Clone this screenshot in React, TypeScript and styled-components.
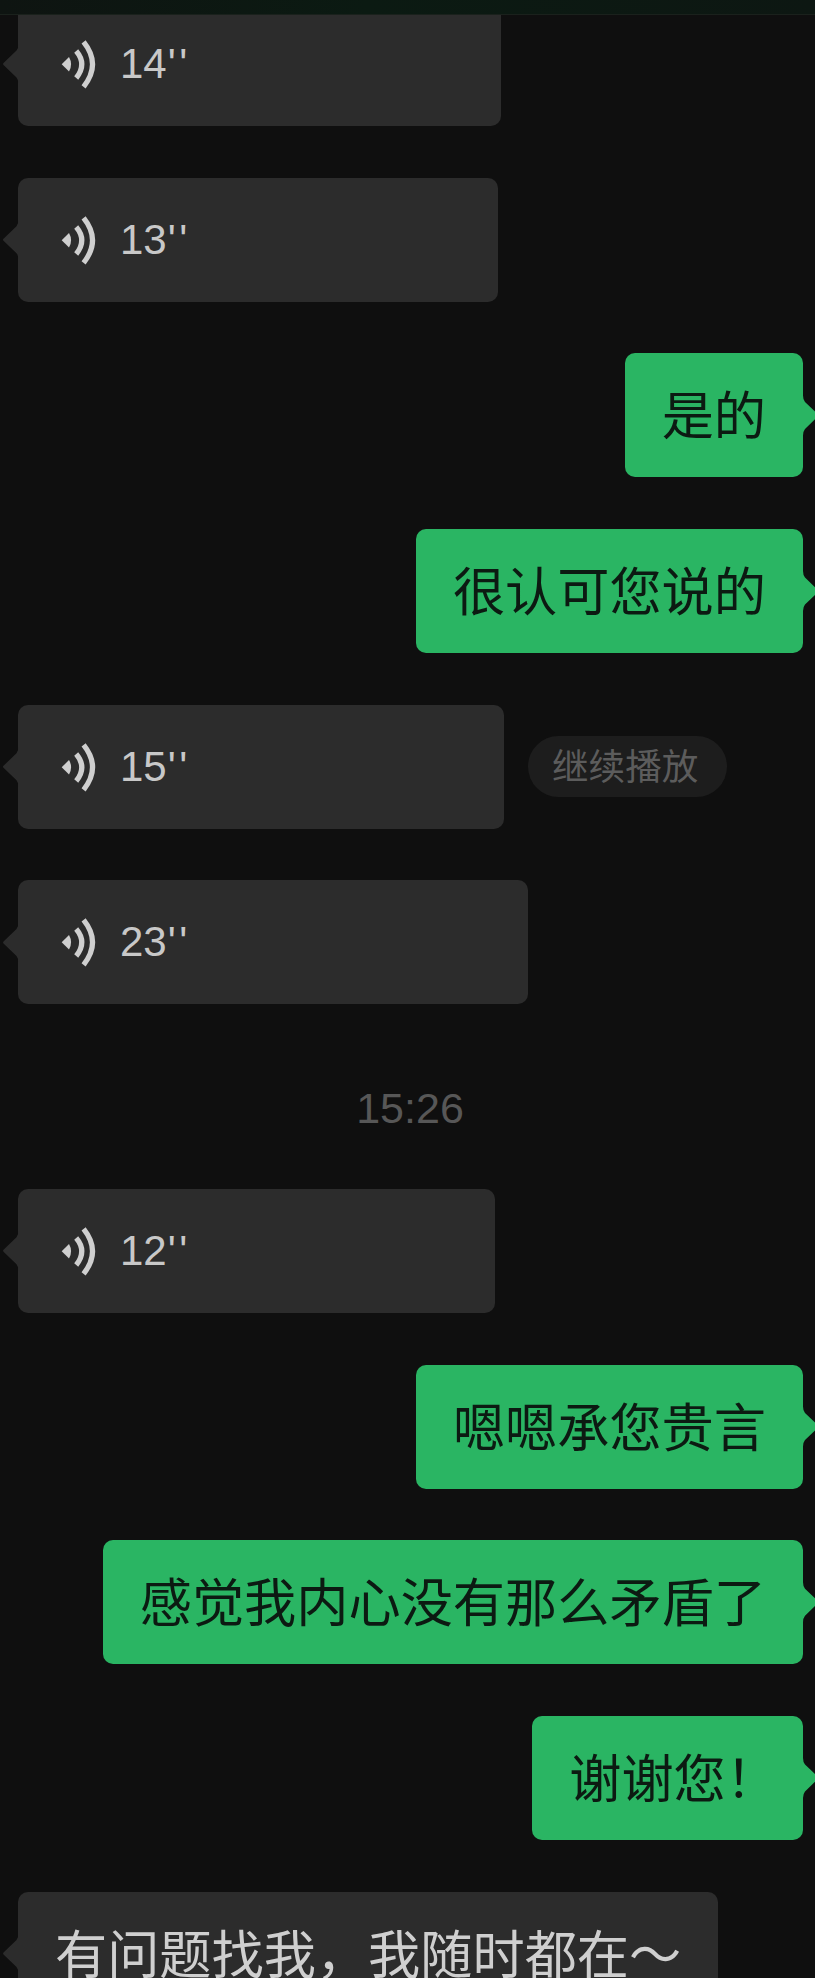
import React from 'react';
import styled, { createGlobalStyle } from 'styled-components';

const GlobalStyle = createGlobalStyle`
  html, body {
    margin: 0;
    padding: 0;
    background: #0f0f0f;
  }
  body {
    width: 815px;
    height: 1978px;
    overflow: hidden;
    font-family: "Liberation Sans", "Noto Sans CJK SC", sans-serif;
  }
`;

const Page = styled.div`
  width: 815px;
  height: 1978px;
  overflow: hidden;
  background: #0f0f0f;
`;

const TopBar = styled.div`
  position: relative;
  z-index: 2;
  height: 15px;
  box-sizing: border-box;
  background: linear-gradient(90deg, #0e1411 0%, #0b1a12 45%, #0d1712 100%);
  border-bottom: 1px solid #1a211c;
`;

const MessageList = styled.div`
  display: flex;
  flex-direction: column;
  gap: 51.7px;
  margin-top: -13px;
`;

const Row = styled.div<{ $mine?: boolean }>`
  display: flex;
  align-items: center;
  justify-content: ${(p) => (p.$mine ? 'flex-end' : 'flex-start')};
  padding: ${(p) => (p.$mine ? '0 12px 0 0' : '0 0 0 18px')};
`;

const Bubble = styled.div<{ $mine?: boolean }>`
  position: relative;
  box-sizing: border-box;
  height: 124px;
  display: flex;
  align-items: center;
  border-radius: 10px;
  background: ${(p) => (p.$mine ? '#2ab563' : '#2c2c2c')};
  color: ${(p) => (p.$mine ? '#0c1a12' : '#cfcfcf')};

  /* tail: flares into the bubble edge, mirrored for my own messages */
  &::before {
    content: '';
    position: absolute;
    top: 50%;
    ${(p) => (p.$mine ? 'right: -15.5px; transform: scaleX(-1);' : 'left: -15.5px;')}
    width: 16px;
    height: 40px;
    margin-top: -20px;
    background: inherit;
    clip-path: path('M16 0 Q16 4 14 6.5 L1 19 Q0 20 1 21 L14 33.5 Q16 36 16 40 Z');
  }
`;

const TextBubble = styled(Bubble)`
  padding: 0 37px 6px;
  font-family: "Noto Sans CJK SC", sans-serif;
  font-size: 52.2px;
  line-height: 62px;
  white-space: nowrap;
`;

const NarrowMark = styled.span`
  margin-right: -12px;
`;

const VoiceBubble = styled(Bubble)<{ $width: number }>`
  width: ${(p) => p.$width}px;
  padding-left: 42px;
  gap: 24px;
`;

const Duration = styled.span`
  font-size: 42px;
  line-height: 50px;
  color: #c8c8c8;
`;

const Quotes = styled.span`
  margin-left: 1px;
  letter-spacing: 3.5px;
`;

const ResumePill = styled.div`
  margin-left: 24px;
  height: 61px;
  box-sizing: border-box;
  padding: 0 29px 4px 24px;
  display: flex;
  align-items: center;
  border-radius: 31px;
  background: #1d1d1d;
  color: #5c5c5c;
  font-family: "Noto Sans CJK SC", sans-serif;
  font-size: 36.6px;
`;

const TimeRow = styled.div`
  height: 81px;
  box-sizing: border-box;
  padding: 27px 0 0 5px;
  text-align: center;
  font-size: 43px;
  line-height: 50px;
  color: #575757;
`;

const VoiceIcon = () => (
  <svg width="36" height="54" viewBox="0 0 36 54" fill="none">
    <path d="M1.7 27.3 L9 20 Q13.2 27.3 9 34.6 Z" fill="#cfcfcf" />
    <path d="M16.2 14 Q27.4 27.3 16.2 41" stroke="#cfcfcf" strokeWidth="5.2" />
    <path d="M23.6 4.8 Q41.5 27.3 23.6 49.8" stroke="#cfcfcf" strokeWidth="5.2" />
  </svg>
);

const Voice = ({ seconds, width, resume }: { seconds: number; width: number; resume?: boolean }) => (
  <Row>
    <VoiceBubble $width={width}>
      <VoiceIcon />
      <Duration>
        {seconds}
        <Quotes>''</Quotes>
      </Duration>
    </VoiceBubble>
    {resume && <ResumePill>继续播放</ResumePill>}
  </Row>
);

const Mine = ({ children }: { children: React.ReactNode }) => (
  <Row $mine>
    <TextBubble $mine>{children}</TextBubble>
  </Row>
);

const App = () => (
  <Page>
    <GlobalStyle />
    <TopBar />
    <MessageList>
      <Voice seconds={14} width={483} />
      <Voice seconds={13} width={480} />
      <Mine>是的</Mine>
      <Mine>很认可您说的</Mine>
      <Voice seconds={15} width={486} resume />
      <Voice seconds={23} width={510} />
      <TimeRow>15:26</TimeRow>
      <Voice seconds={12} width={477} />
      <Mine>嗯嗯承您贵言</Mine>
      <Mine>感觉我内心没有那么矛盾了</Mine>
      <Mine>
        谢谢您<NarrowMark>！</NarrowMark>
      </Mine>
      <Row>
        <TextBubble>有问题找我，我随时都在～</TextBubble>
      </Row>
    </MessageList>
  </Page>
);

export default App;
